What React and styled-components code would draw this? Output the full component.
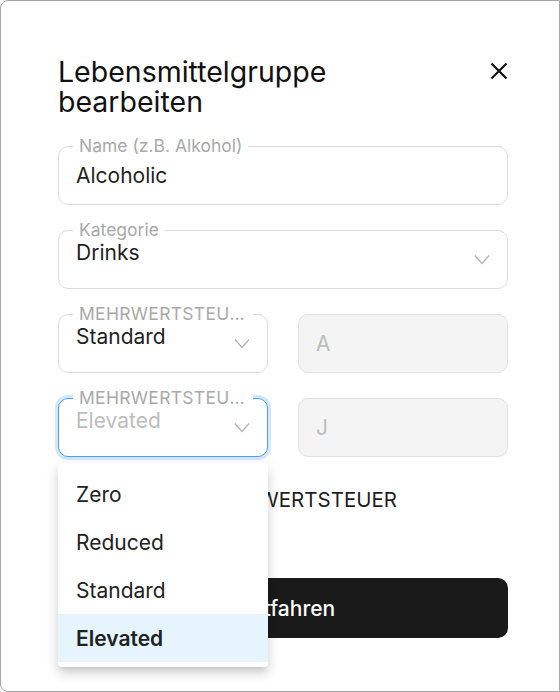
import React from 'react';
import styled, { createGlobalStyle } from 'styled-components';

const GlobalStyle = createGlobalStyle`
  html, body {
    margin: 0;
    padding: 0;
    background: #ffffff;
  }
  * {
    box-sizing: border-box;
  }
`

const Dialog = styled.div`
  width: 560px;
  height: 692px;
  background: #fff;
  border: 1px solid #a6a6a6;
  border-radius: 8px 0 0 8px;
  padding: 56px 51px 0 57px;
  font-family: Inter, "Noto Sans", sans-serif;
  color: #1f1f1f;
  overflow: hidden;
`

const Header = styled.div`
  display: flex;
  justify-content: space-between;
  align-items: flex-start;
  margin-bottom: 29px;
`

const Title = styled.h2`
  margin: 0;
  max-width: 340px;
  font-size: 28.5px;
  line-height: 30px;
  font-weight: 400;
  color: #111;
`

const CloseButton = styled.button`
  width: 32px;
  height: 32px;
  margin: -2px -7px 0 0;
  padding: 0;
  border: none;
  background: none;
  display: flex;
  align-items: center;
  justify-content: center;
  color: #111;
  cursor: pointer;
`

const Form = styled.div`
  display: flex;
  flex-direction: column;
  gap: 25px;
`

const Row = styled.div`
  display: grid;
  grid-template-columns: 1fr 1fr;
  gap: 30px;
`

const Box = styled.div`
  position: relative;
  height: 59px;
  border: 1px solid ${p => (p.$focused ? '#4aa3ef' : p.$disabled ? '#e2e2e2' : '#dcdcdc')};
  border-radius: 10px;
  background: ${p => (p.$disabled ? '#f4f4f4' : '#fff')};
  box-shadow: ${p => (p.$focused ? '0 0 0 3px #d2e8fc' : 'none')};
  display: flex;
  justify-content: space-between;
  align-items: center;
  padding: 0 17px 0 17px;
`

const Label = styled.span`
  position: absolute;
  top: -12px;
  left: 14px;
  max-width: ${p => p.$max || 'none'};
  padding: 0 6px;
  background: #fff;
  font-size: 17.5px;
  line-height: 22px;
  color: #a9a9a9;
  text-transform: ${p => (p.$caps ? 'uppercase' : 'none')};
  letter-spacing: ${p => (p.$caps ? '0.3px' : '0')};
  white-space: nowrap;
  overflow: hidden;
  text-overflow: ellipsis;
`

const Value = styled.span`
  font-size: 21px;
  line-height: 24px;
  color: ${p => (p.$muted ? '#bdbdbd' : '#1f1f1f')};
  align-self: ${p => (p.$top ? 'flex-start' : 'center')};
  margin-top: ${p => (p.$top ? '10px' : '0')};
`

const Menu = styled.ul`
  position: absolute;
  top: calc(100% + 7px);
  left: -1px;
  width: calc(100% + 2px);
  margin: 0;
  padding: 7px 0 5px;
  list-style: none;
  background: #fff;
  border-radius: 4px;
  box-shadow: 0 5px 5px -3px rgba(0, 0, 0, 0.12), 0 8px 10px 1px rgba(0, 0, 0, 0.08),
    0 3px 14px 2px rgba(0, 0, 0, 0.07);
  z-index: 10;
`

const MenuItem = styled.li`
  height: 48px;
  display: flex;
  align-items: center;
  padding-left: 18px;
  font-size: 21px;
  color: #222;
  font-weight: ${p => (p.$selected ? 600 : 400)};
  background: ${p => (p.$selected ? '#e5f4fd' : 'transparent')};
`

const SectionText = styled.div`
  margin-top: 31px;
  font-size: 20.5px;
  line-height: 24px;
  color: #1f1f1f;
`

const SubmitButton = styled.button`
  margin-top: 66px;
  width: 100%;
  height: 60px;
  border: none;
  border-radius: 10px;
  background: #1a1a1a;
  color: #fff;
  font-family: inherit;
  font-size: 21px;
  font-weight: 500;
  cursor: pointer;
`

function Chevron() {
  return (
    <svg width="16" height="11" viewBox="0 0 16 11" fill="none">
      <polyline points="1,1.5 8,9.5 15,1.5" stroke="#b3b3b3" strokeWidth="1.3" />
    </svg>
  );
}

function CloseIcon() {
  return (
    <svg width="18" height="18" viewBox="0 0 18 18">
      <path d="M1.5 1.5 L16.5 16.5 M16.5 1.5 L1.5 16.5" stroke="#111" strokeWidth="2.2" />
    </svg>
  );
}

const options = ['Zero', 'Reduced', 'Standard', 'Elevated'];

function EditFoodGroup() {
  return (
    <Dialog>
      <Header>
        <Title>Lebensmittelgruppe bearbeiten</Title>
        <CloseButton aria-label="Schließen">
          <CloseIcon />
        </CloseButton>
      </Header>
      <Form>
        <Box>
          <Label>Name (z.B. Alkohol)</Label>
          <Value>Alcoholic</Value>
        </Box>
        <Box>
          <Label>Kategorie</Label>
          <Value $top>Drinks</Value>
          <Chevron />
        </Box>
        <Row>
          <Box>
            <Label $caps $max="180px">Mehrwertsteuer Standard</Label>
            <Value $top>Standard</Value>
            <Chevron />
          </Box>
          <Box $disabled>
            <Value $muted>A</Value>
          </Box>
        </Row>
        <Row>
          <Box $focused>
            <Label $caps $max="180px">Mehrwertsteuer Alternativ</Label>
            <Value $top $muted>Elevated</Value>
            <Chevron />
            <Menu>
              {options.map(o => (
                <MenuItem key={o} $selected={o === 'Elevated'}>{o}</MenuItem>
              ))}
            </Menu>
          </Box>
          <Box $disabled>
            <Value $muted>J</Value>
          </Box>
        </Row>
      </Form>
      <SectionText>ALTERNATIVE MEHRWERTSTEUER</SectionText>
      <SubmitButton>Fortfahren</SubmitButton>
    </Dialog>
  );
}

export default function App() {
  return (
    <>
      <GlobalStyle />
      <EditFoodGroup />
    </>
  );
}
